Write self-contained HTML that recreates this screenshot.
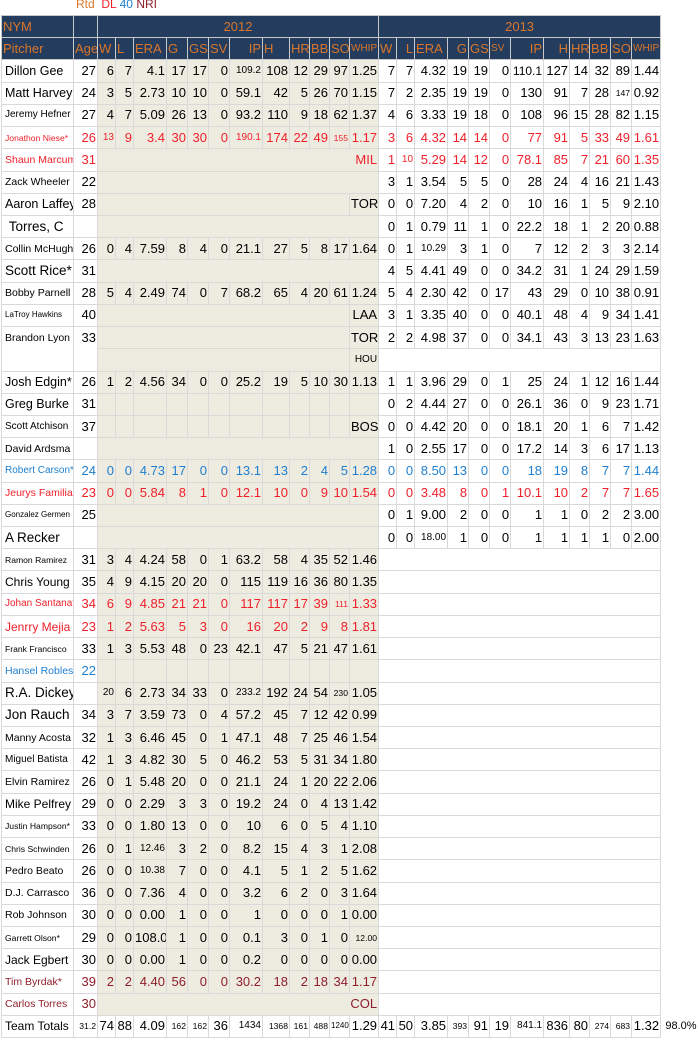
<!DOCTYPE html>
<html><head><meta charset="utf-8">
<style>
body{margin:0;background:#fff;font-family:"Liberation Sans",Arial,sans-serif;}
.leg{position:absolute;left:76px;top:-3px;font-size:12px;}
table{position:absolute;left:1px;top:15px;border-collapse:collapse;table-layout:fixed;width:697px;font-size:13px;color:#000;}
td{border:1px solid #d9d9d9;height:21.22px;padding:0 1px;text-align:right;white-space:nowrap;overflow:hidden;line-height:20px;}
tr.h td{background:#243c5e;color:#d9762a;border-color:#c8c8c8;text-align:left;font-size:13px;}
tr.h td.c{text-align:center}
td.n{text-align:left;padding-left:3px;font-size:10.5px;}
.b{background:#eeebe0}
td.w{background:#fff}
td.s{font-size:10px}td.t{font-size:8.6px}td.xs{font-size:8px}td.l{font-size:12.5px}td.xl{font-size:13.5px}td.m{font-size:12px}
tr.h td.s{font-size:10px}
tr.r td{color:#f0202a}
tr.u td{color:#1e7fd0}
tr.d td{color:#8e1f2a}
td.x{border:none;background:#fff;font-size:11px}
</style></head><body>
<div class="leg"><span style="color:#d9762a">Rtd</span>&nbsp; <span style="color:#f0202a">DL</span> <span style="color:#1e7fd0">40</span> <span style="color:#8e1f2a">NRI</span></div>
<table>
<colgroup>
<col style="width:72px"><col style="width:24px">
<col class="b" style="width:18px"><col class="b" style="width:18px"><col class="b" style="width:33px"><col class="b" style="width:21px"><col class="b" style="width:21px"><col class="b" style="width:21px"><col class="b" style="width:33px"><col class="b" style="width:27px"><col class="b" style="width:20px"><col class="b" style="width:20px"><col class="b" style="width:20px"><col class="b" style="width:29px">
<col style="width:18px"><col style="width:18px"><col style="width:33px"><col style="width:21px"><col style="width:21px"><col style="width:21px"><col style="width:33px"><col style="width:26px"><col style="width:20px"><col style="width:21px"><col style="width:21px"><col style="width:29px">
<col style="width:37px">
</colgroup>
<tr class="h"><td>NYM</td><td></td><td colspan="12" class="c">2012</td><td colspan="12" class="c">2013</td></tr>
<tr class="h"><td>Pitcher</td><td>Age</td><td>W</td><td>L</td><td>ERA</td><td>G</td><td>GS</td><td>SV</td><td style="text-align:right">IP</td><td>H</td><td>HR</td><td>BB</td><td>SO</td><td class="s">WHIP</td><td>W</td><td style="text-align:right">L</td><td>ERA</td><td style="text-align:right">G</td><td>GS</td><td class="s">SV</td><td style="text-align:right">IP</td><td style="text-align:right">H</td><td>HR</td><td>BB</td><td>SO</td><td class="s">WHIP</td></tr>
<tr><td class="n l">Dillon Gee</td><td>27</td><td>6</td><td>7</td><td>4.1</td><td>17</td><td>17</td><td>0</td><td class="s">109.2</td><td>108</td><td>12</td><td>29</td><td>97</td><td>1.25</td><td>7</td><td>7</td><td>4.32</td><td>19</td><td>19</td><td>0</td><td class="m">110.1</td><td>127</td><td>14</td><td>32</td><td>89</td><td>1.44</td></tr>
<tr><td class="n l">Matt Harvey</td><td>24</td><td>3</td><td>5</td><td>2.73</td><td>10</td><td>10</td><td>0</td><td>59.1</td><td>42</td><td>5</td><td>26</td><td>70</td><td>1.15</td><td>7</td><td>2</td><td>2.35</td><td>19</td><td>19</td><td>0</td><td>130</td><td>91</td><td>7</td><td>28</td><td class="t">147</td><td>0.92</td></tr>
<tr><td class="n s">Jeremy Hefner</td><td>27</td><td>4</td><td>7</td><td>5.09</td><td>26</td><td>13</td><td>0</td><td>93.2</td><td>110</td><td>9</td><td>18</td><td>62</td><td>1.37</td><td>4</td><td>6</td><td>3.33</td><td>19</td><td>18</td><td>0</td><td>108</td><td>96</td><td>15</td><td>28</td><td>82</td><td>1.15</td></tr>
<tr class="r"><td class="n t">Jonathon Niese*</td><td>26</td><td class="s">13</td><td>9</td><td>3.4</td><td>30</td><td>30</td><td>0</td><td class="s">190.1</td><td>174</td><td>22</td><td>49</td><td class="t">155</td><td>1.17</td><td>3</td><td>6</td><td>4.32</td><td>14</td><td>14</td><td>0</td><td>77</td><td>91</td><td>5</td><td>33</td><td>49</td><td>1.61</td></tr>
<tr class="r"><td class="n">Shaun Marcum</td><td>31</td><td colspan="12">MIL</td><td>1</td><td class="s">10</td><td>5.29</td><td>14</td><td>12</td><td>0</td><td>78.1</td><td>85</td><td>7</td><td>21</td><td>60</td><td>1.35</td></tr>
<tr><td class="n">Zack Wheeler</td><td>22</td><td colspan="12"></td><td>3</td><td>1</td><td>3.54</td><td>5</td><td>5</td><td>0</td><td>28</td><td>24</td><td>4</td><td>16</td><td>21</td><td>1.43</td></tr>
<tr><td class="n l">Aaron Laffey*</td><td>28</td><td colspan="11"></td><td>TOR</td><td>0</td><td>0</td><td>7.20</td><td>4</td><td>2</td><td>0</td><td>10</td><td>16</td><td>1</td><td>5</td><td>9</td><td>2.10</td></tr>
<tr><td class="n xl">&nbsp;Torres, C</td><td></td><td colspan="12"></td><td>0</td><td>1</td><td>0.79</td><td>11</td><td>1</td><td>0</td><td>22.2</td><td>18</td><td>1</td><td>2</td><td>20</td><td>0.88</td></tr>
<tr><td class="n">Collin McHugh</td><td>26</td><td>0</td><td>4</td><td>7.59</td><td>8</td><td>4</td><td>0</td><td>21.1</td><td>27</td><td>5</td><td>8</td><td>17</td><td>1.64</td><td>0</td><td>1</td><td class="s">10.29</td><td>3</td><td>1</td><td>0</td><td>7</td><td>12</td><td>2</td><td>3</td><td>3</td><td>2.14</td></tr>
<tr><td class="n xl">Scott Rice*</td><td>31</td><td colspan="12"></td><td>4</td><td>5</td><td>4.41</td><td>49</td><td>0</td><td>0</td><td>34.2</td><td>31</td><td>1</td><td>24</td><td>29</td><td>1.59</td></tr>
<tr><td class="n">Bobby Parnell</td><td>28</td><td>5</td><td>4</td><td>2.49</td><td>74</td><td>0</td><td>7</td><td>68.2</td><td>65</td><td>4</td><td>20</td><td>61</td><td>1.24</td><td>5</td><td>4</td><td>2.30</td><td>42</td><td>0</td><td>17</td><td>43</td><td>29</td><td>0</td><td>10</td><td>38</td><td>0.91</td></tr>
<tr><td class="n xs">LaTroy Hawkins</td><td>40</td><td colspan="11"></td><td>LAA</td><td>3</td><td>1</td><td>3.35</td><td>40</td><td>0</td><td>0</td><td>40.1</td><td>48</td><td>4</td><td>9</td><td>34</td><td>1.41</td></tr>
<tr><td class="n" rowspan="2" style="vertical-align:top;padding-top:1px">Brandon Lyon</td><td rowspan="2" style="vertical-align:top;padding-top:1px">33</td><td colspan="11"></td><td>TOR</td><td>2</td><td>2</td><td>4.98</td><td>37</td><td>0</td><td>0</td><td>34.1</td><td>43</td><td>3</td><td>13</td><td>23</td><td>1.63</td></tr>
<tr><td colspan="11"></td><td class="s">HOU</td><td colspan="12"></td></tr>
<tr><td class="n l">Josh Edgin*</td><td>26</td><td>1</td><td>2</td><td>4.56</td><td>34</td><td>0</td><td>0</td><td>25.2</td><td>19</td><td>5</td><td>10</td><td>30</td><td>1.13</td><td>1</td><td>1</td><td>3.96</td><td>29</td><td>0</td><td>1</td><td>25</td><td>24</td><td>1</td><td>12</td><td>16</td><td>1.44</td></tr>
<tr><td class="n l">Greg Burke</td><td>31</td><td></td><td></td><td></td><td></td><td></td><td></td><td></td><td></td><td></td><td></td><td></td><td></td><td>0</td><td>2</td><td>4.44</td><td>27</td><td>0</td><td>0</td><td>26.1</td><td>36</td><td>0</td><td>9</td><td>23</td><td>1.71</td></tr>
<tr><td class="n s">Scott Atchison</td><td>37</td><td></td><td></td><td></td><td></td><td></td><td></td><td></td><td></td><td></td><td></td><td></td><td>BOS</td><td>0</td><td>0</td><td>4.42</td><td>20</td><td>0</td><td>0</td><td>18.1</td><td>20</td><td>1</td><td>6</td><td>7</td><td>1.42</td></tr>
<tr><td class="n">David Ardsma</td><td></td><td colspan="12"></td><td>1</td><td>0</td><td>2.55</td><td>17</td><td>0</td><td>0</td><td>17.2</td><td>14</td><td>3</td><td>6</td><td>17</td><td>1.13</td></tr>
<tr class="u"><td class="n s">Robert Carson*</td><td>24</td><td>0</td><td>0</td><td>4.73</td><td>17</td><td>0</td><td>0</td><td>13.1</td><td>13</td><td>2</td><td>4</td><td>5</td><td>1.28</td><td>0</td><td>0</td><td>8.50</td><td>13</td><td>0</td><td>0</td><td>18</td><td>19</td><td>8</td><td>7</td><td>7</td><td>1.44</td></tr>
<tr class="r"><td class="n">Jeurys Familia</td><td>23</td><td>0</td><td>0</td><td>5.84</td><td>8</td><td>1</td><td>0</td><td>12.1</td><td>10</td><td>0</td><td>9</td><td>10</td><td>1.54</td><td>0</td><td>0</td><td>3.48</td><td>8</td><td>0</td><td>1</td><td>10.1</td><td>10</td><td>2</td><td>7</td><td>7</td><td>1.65</td></tr>
<tr><td class="n xs">Gonzalez Germen</td><td>25</td><td colspan="12"></td><td>0</td><td>1</td><td>9.00</td><td>2</td><td>0</td><td>0</td><td>1</td><td>1</td><td>0</td><td>2</td><td>2</td><td>3.00</td></tr>
<tr><td class="n xl">A Recker</td><td></td><td colspan="12"></td><td>0</td><td>0</td><td class="s">18.00</td><td>1</td><td>0</td><td>0</td><td>1</td><td>1</td><td>1</td><td>1</td><td>0</td><td>2.00</td></tr>
<tr><td class="n t">Ramon Ramirez</td><td>31</td><td>3</td><td>4</td><td>4.24</td><td>58</td><td>0</td><td>1</td><td>63.2</td><td>58</td><td>4</td><td>35</td><td>52</td><td>1.46</td><td colspan="12"></td></tr>
<tr><td class="n m">Chris Young</td><td>35</td><td>4</td><td>9</td><td>4.15</td><td>20</td><td>20</td><td>0</td><td>115</td><td>119</td><td>16</td><td>36</td><td>80</td><td>1.35</td><td colspan="12"></td></tr>
<tr class="r"><td class="n s">Johan Santana*</td><td>34</td><td>6</td><td>9</td><td>4.85</td><td>21</td><td>21</td><td>0</td><td>117</td><td>117</td><td>17</td><td>39</td><td class="t">111</td><td>1.33</td><td colspan="12"></td></tr>
<tr class="r"><td class="n m">Jenrry Mejia</td><td>23</td><td>1</td><td>2</td><td>5.63</td><td>5</td><td>3</td><td>0</td><td>16</td><td>20</td><td>2</td><td>9</td><td>8</td><td>1.81</td><td colspan="12"></td></tr>
<tr><td class="n t">Frank Francisco</td><td>33</td><td>1</td><td>3</td><td>5.53</td><td>48</td><td>0</td><td>23</td><td>42.1</td><td>47</td><td>5</td><td>21</td><td>47</td><td>1.61</td><td colspan="12"></td></tr>
<tr class="u"><td class="n">Hansel Robles</td><td>22</td><td></td><td></td><td></td><td></td><td></td><td></td><td></td><td></td><td></td><td></td><td></td><td></td><td colspan="12"></td></tr>
<tr><td class="n xl">R.A. Dickey</td><td></td><td class="s">20</td><td>6</td><td>2.73</td><td>34</td><td>33</td><td>0</td><td class="s">233.2</td><td>192</td><td>24</td><td>54</td><td class="t">230</td><td>1.05</td><td colspan="12"></td></tr>
<tr><td class="n xl">Jon Rauch</td><td>34</td><td>3</td><td>7</td><td>3.59</td><td>73</td><td>0</td><td>4</td><td>57.2</td><td>45</td><td>7</td><td>12</td><td>42</td><td>0.99</td><td colspan="12"></td></tr>
<tr><td class="n">Manny Acosta</td><td>32</td><td>1</td><td>3</td><td>6.46</td><td>45</td><td>0</td><td>1</td><td>47.1</td><td>48</td><td>7</td><td>25</td><td>46</td><td>1.54</td><td colspan="12"></td></tr>
<tr><td class="n s">Miguel Batista</td><td>42</td><td>1</td><td>3</td><td>4.82</td><td>30</td><td>5</td><td>0</td><td>46.2</td><td>53</td><td>5</td><td>31</td><td>34</td><td>1.80</td><td colspan="12"></td></tr>
<tr><td class="n">Elvin Ramirez</td><td>26</td><td>0</td><td>1</td><td>5.48</td><td>20</td><td>0</td><td>0</td><td>21.1</td><td>24</td><td>1</td><td>20</td><td>22</td><td>2.06</td><td colspan="12"></td></tr>
<tr><td class="n m">Mike Pelfrey</td><td>29</td><td>0</td><td>0</td><td>2.29</td><td>3</td><td>3</td><td>0</td><td>19.2</td><td>24</td><td>0</td><td>4</td><td>13</td><td>1.42</td><td colspan="12"></td></tr>
<tr><td class="n t">Justin Hampson*</td><td>33</td><td>0</td><td>0</td><td>1.80</td><td>13</td><td>0</td><td>0</td><td>10</td><td>6</td><td>0</td><td>5</td><td>4</td><td>1.10</td><td colspan="12"></td></tr>
<tr><td class="n t">Chris Schwinden</td><td>26</td><td>0</td><td>1</td><td class="s">12.46</td><td>3</td><td>2</td><td>0</td><td>8.2</td><td>15</td><td>4</td><td>3</td><td>1</td><td>2.08</td><td colspan="12"></td></tr>
<tr><td class="n">Pedro Beato</td><td>26</td><td>0</td><td>0</td><td class="s">10.38</td><td>7</td><td>0</td><td>0</td><td>4.1</td><td>5</td><td>1</td><td>2</td><td>5</td><td>1.62</td><td colspan="12"></td></tr>
<tr><td class="n">D.J. Carrasco</td><td>36</td><td>0</td><td>0</td><td>7.36</td><td>4</td><td>0</td><td>0</td><td>3.2</td><td>6</td><td>2</td><td>0</td><td>3</td><td>1.64</td><td colspan="12"></td></tr>
<tr><td class="n">Rob Johnson</td><td>30</td><td>0</td><td>0</td><td>0.00</td><td>1</td><td>0</td><td>0</td><td>1</td><td>0</td><td>0</td><td>0</td><td>1</td><td>0.00</td><td colspan="12"></td></tr>
<tr><td class="n t">Garrett Olson*</td><td>29</td><td>0</td><td>0</td><td>108.0</td><td>1</td><td>0</td><td>0</td><td>0.1</td><td>3</td><td>0</td><td>1</td><td>0</td><td class="t">12.00</td><td colspan="12"></td></tr>
<tr><td class="n m">Jack Egbert</td><td>30</td><td>0</td><td>0</td><td>0.00</td><td>1</td><td>0</td><td>0</td><td>0.2</td><td>0</td><td>0</td><td>0</td><td>0</td><td>0.00</td><td colspan="12"></td></tr>
<tr class="d"><td class="n">Tim Byrdak*</td><td>39</td><td>2</td><td>2</td><td>4.40</td><td>56</td><td>0</td><td>0</td><td>30.2</td><td>18</td><td>2</td><td>18</td><td>34</td><td>1.17</td><td colspan="12"></td></tr>
<tr class="d"><td class="n">Carlos Torres</td><td>30</td><td colspan="12">COL</td><td colspan="12"></td></tr>
<tr><td class="n m">Team Totals</td><td class="t w">31.2</td><td class="w">74</td><td class="w">88</td><td class="w">4.09</td><td class="t w">162</td><td class="t w">162</td><td class="w">36</td><td class="s w">1434</td><td class="t w">1368</td><td class="t w">161</td><td class="t w">488</td><td class="xs w">1240</td><td class="w">1.29</td><td>41</td><td>50</td><td>3.85</td><td class="t">393</td><td>91</td><td>19</td><td class="s">841.1</td><td>836</td><td>80</td><td class="t">274</td><td class="t">683</td><td>1.32</td><td class="x">98.0%</td></tr>
</table>
</body></html>
